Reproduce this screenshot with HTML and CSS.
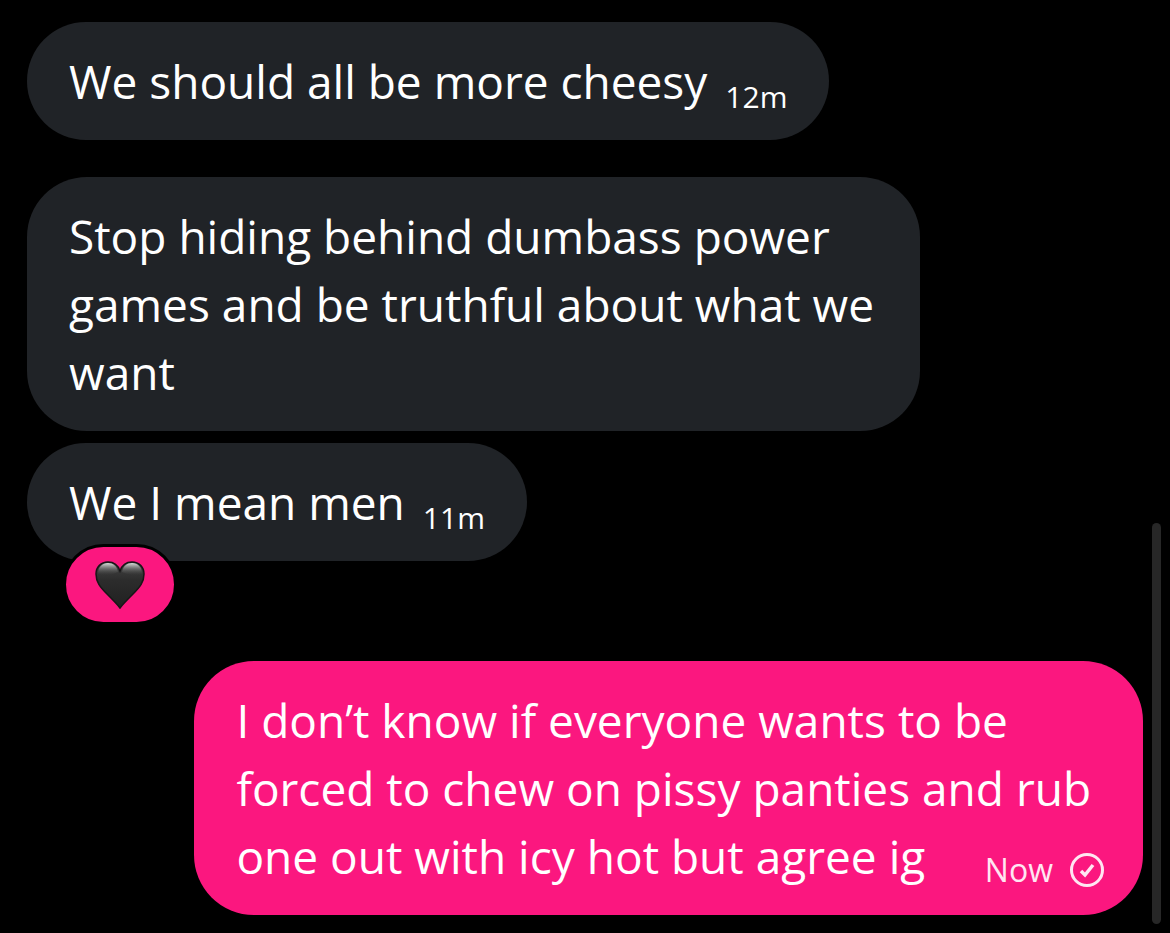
FILE: index.html
```
<!DOCTYPE html>
<html lang="en">

<head>
    <meta charset="UTF-8">
    <meta name="viewport" content="width=device-width, initial-scale=1.0">
    <title>Messages</title>
    <link rel="stylesheet" href="styles.css">
</head>

<body>
    <main class="chat">
        <div class="message received first">
            <p>We should all be more cheesy</p>
            <time>12m</time>
        </div>
        <div class="message received long">
            <p>Stop hiding behind dumbass power games and be truthful about what we want</p>
        </div>
        <div class="message received">
            <p>We I mean men</p>
            <time>11m</time>
            <button class="reaction" aria-label="Black heart reaction">
                <svg viewBox="0 0 50 48" width="50" height="48">
                    <defs>
                        <linearGradient id="heart" x1="0" y1="0" x2="0" y2="1">
                            <stop offset="0" stop-color="#444" />
                            <stop offset="0.4" stop-color="#2c2c2c" />
                            <stop offset="1" stop-color="#202020" />
                        </linearGradient>
                        <linearGradient id="shine" x1="0" y1="0" x2="0" y2="1">
                            <stop offset="0" stop-color="#dde0dd" />
                            <stop offset="1" stop-color="#444" stop-opacity="0" />
                        </linearGradient>
                    </defs>
                    <path fill="url(#heart)" stroke="#161616" stroke-width="1.5" d="M25 47C23 44 17 38 12 33C5 26 1 21 1 13C1 6 6 1 13 1C19 1 23 4 25 10C27 4 31 1 37 1C44 1 49 6 49 13C49 21 45 26 38 33C33 38 27 44 25 47Z" />
                    <path fill="url(#shine)" d="M3 13C3 6 7 2 13 2C18 2 22 5 23 11C19 13 8 16 3 13Z" />
                    <path fill="url(#shine)" d="M47 13C47 6 43 2 37 2C32 2 28 5 27 11C31 13 42 16 47 13Z" />
                </svg>
            </button>
        </div>
        <div class="message sent">
            <p>I don’t know if everyone wants to be forced to chew on pissy panties and rub one out with icy hot but agree ig
                <span class="status">
                    <time>Now</time>
                    <svg viewBox="0 0 36 36" width="36" height="36" fill="none" stroke="currentColor" stroke-width="3">
                        <circle cx="18" cy="18" r="15.5" />
                        <path stroke-width="3.5" d="M12 19L16 23L24 13" />
                    </svg>
                </span>
            </p>
        </div>
    </main>
    <div class="scroll-thumb"></div>
</body>

</html>
```
FILE: styles.css
```
* {
    box-sizing: border-box;
}

body {
    margin: 0;
    background-color: #000;
    color: #fff;
    font-family: "Open Sans", sans-serif;
}

.chat {
    display: flex;
    flex-direction: column;
    align-items: flex-start;
    padding: 22px 27px 18px;
}

.message {
    position: relative;
    display: flex;
    gap: 18px;
    padding: 25px 42px;
    border-radius: 60px;
    font-size: 46px;
    line-height: 68px;
}

.message p {
    margin: 0;
}

.received {
    background-color: #202327;
}

.received time {
    font-size: 30px;
    line-height: 36px;
}

.first {
    margin-bottom: 37px;
}

.long {
    max-width: 80%;
    margin-bottom: 12px;
}

.sent {
    align-self: flex-end;
    max-width: 85%;
    margin-top: 100px;
    padding-right: 38px;
    background-color: #fb177f;
}

time {
    align-self: flex-end;
    font-size: 32px;
    line-height: 40px;
}

/* sits over the bottom edge of the bubble */
.reaction {
    position: absolute;
    left: 36px;
    top: 101px;
    display: flex;
    align-items: center;
    justify-content: center;
    width: 114px;
    height: 81px;
    padding: 0;
    border: 3px solid #000;
    border-radius: 41px;
    background-color: #fb177f;
}

.status {
    float: right;
    display: flex;
    align-items: center;
    gap: 16px;
    margin-top: 28px;
    color: #ffe6f2;
}

.scroll-thumb {
    position: fixed;
    top: 523px;
    right: 9px;
    bottom: 9px;
    width: 9px;
    border-radius: 5px;
    background-color: #272727;
}
```
